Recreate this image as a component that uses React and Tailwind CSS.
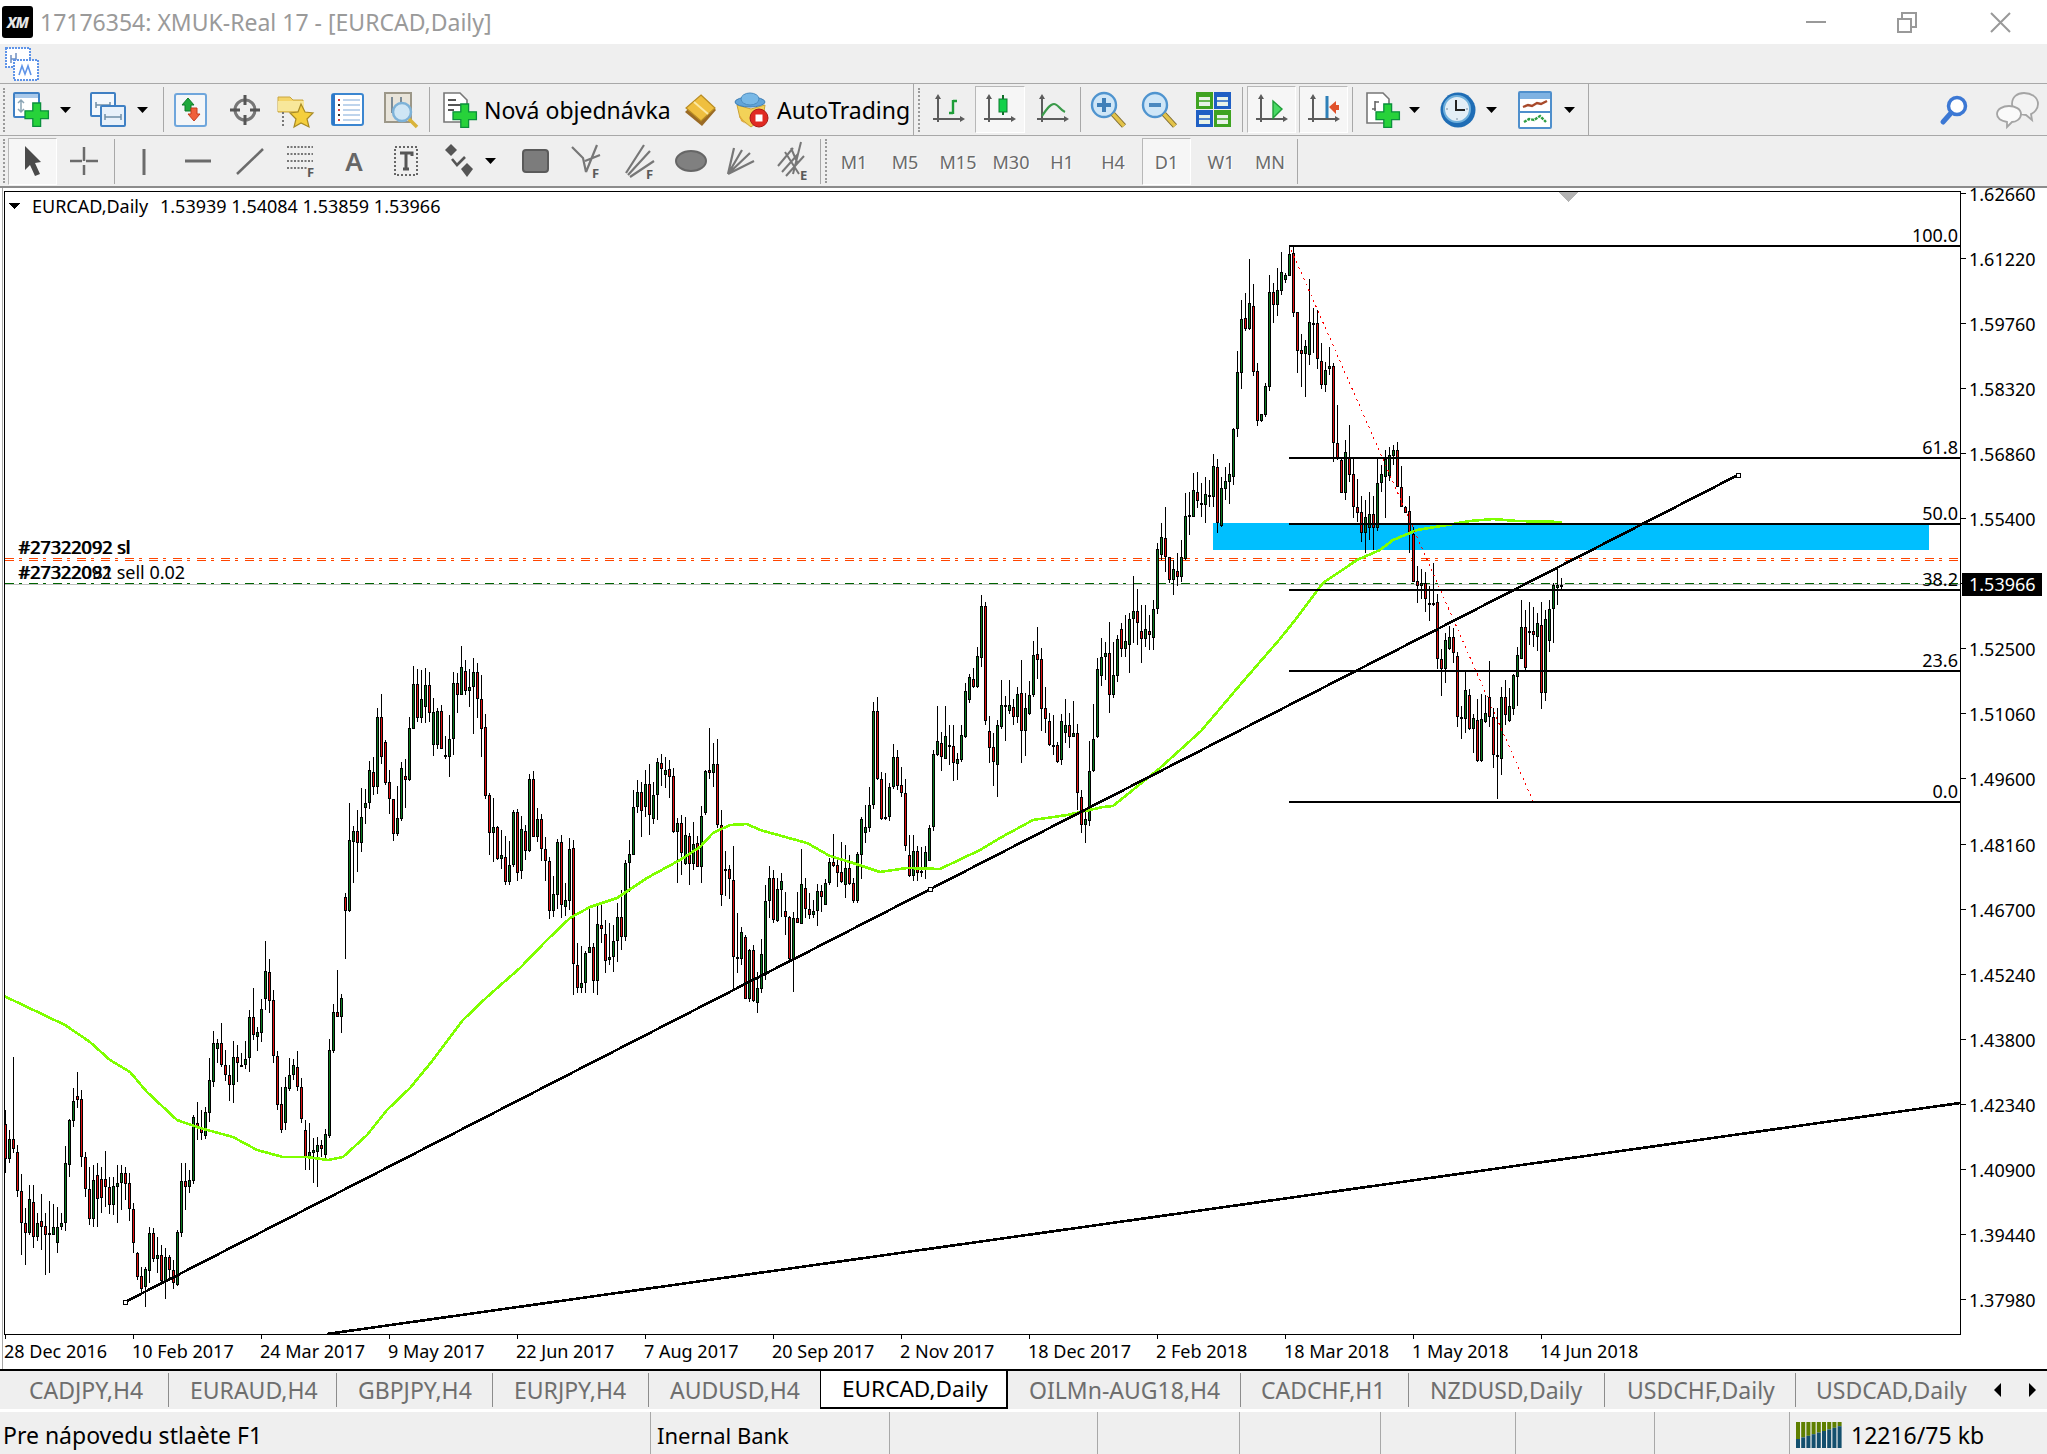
import React from "react";

// candle rows read off the chart: x-pos, body top, body bottom, wick top, wick bottom, colour
// values are 3x crop units, see parseBars
const BARS_A = "16 192 296 150 340 r,28 238 296 210 308 g,40 238 268 -10 280 r,52 276 392 256 412 r,64 392 490 342 586 r,76 490 520 445 614 r,88 418 520 376 525 g,100 426 530 376 564 r,112 488 530 460 544 g,124 484 500 402 570 r,136 498 526 460 646 r,148 520 522 422 638 g,160 502 524 432 524 g,172 500 548 440 578 g,184 488 500 460 510 g,196 310 488 258 512 g,208 180 314 176 352 g,220 124 182 84 200 g,232 108 120 36 145 r,244 118 290 90 320 r,256 290 388 276 412 r,268 388 476 320 496 r,280 360 476 315 502 g,292 344 418 310 502 r,304 358 414 320 460 r,316 358 382 272 440 r,328 382 434 350 462 r,340 378 434 350 465 g,352 370 382 315 490 g,364 340 370 316 450 g,376 338 372 320 420 r,388 370 446 338 482 r,400 446 550 430 578 r,412 580 650 575 660 r,424 648 686 622 706 r,436 628 682 620 742 g,448 520 634 502 670 g,460 520 598 505 606 r,472 584 596 530 640 g,484 584 664 555 670 r,496 590 664 565 716 g,508 590 630 585 660 r,520 630 670 600 686 r,532 516 676 510 678 g,544 362 518 310 532 g,556 362 380 310 450 r,568 360 380 330 398 g,580 172 362 165 372 g,592 190 200 126 240 r,604 208 218 150 240 r,616 156 228 140 236 g";
const BARS_B = "28 1350 1449 1285 1476 g,40 1240 1355 1203 1372 g,52 1240 1256 1228 1300 g,64 1238 1305 1180 1310 r,76 1304 1336 1260 1352 r,88 1336 1366 1305 1412 r,100 1282 1364 1232 1418 g,112 1282 1300 1246 1355 r,124 1305 1306 1270 1306 g,136 1286 1304 1234 1318 g,148 1162 1285 1140 1325 g,160 1162 1216 1075 1230 r,172 1207 1220 1190 1262 g,184 1138 1208 1108 1235 g,196 1024 1106 934 1140 g,208 1027 1112 988 1148 r,220 1111 1279 1080 1298 r,232 1279 1425 1262 1440 r,244 1422 1500 1370 1510 r,256 1372 1480 1340 1500 g,268 1334 1376 1285 1382 g,280 1306 1334 1286 1350 g,292 1310 1370 1262 1382 r,304 1372 1466 1345 1480 r,316 1500 1580 1470 1620 r,328 1566 1582 1480 1620 g,340 1560 1568 1525 1658 g,352 1546 1566 1522 1670 g,364 1544 1556 1530 1580 r,376 1512 1575 1498 1586 g,388 1260 1518 1228 1525 g,400 1147 1262 1122 1270 g,412 1147 1160 1020 1160 r,424 1105 1160 1092 1208 g,436 802 842 790 988 r,448 630 842 520 845 g,460 604 636 588 758 g,472 604 638 540 725 r,484 562 638 475 665 g,496 520 534 478 582 g,508 420 520 393 536 g,520 427 470 382 496 r,532 262 470 235 492 g,544 262 380 192 402 r,556 336 458 330 464 r,568 457 506 420 552 r,580 508 613 508 632 r,592 565 613 468 618 g,604 415 566 396 572 g,616 438 450 388 534 r,628 294 450 262 452 g,640 163 296 108 296 g,652 163 263 118 276 r,664 208 263 120 278 g,676 166 230 115 280 g,688 166 248 126 275 r,700 246 344 205 378 g,712 244 344 235 358 g,724 244 356 225 356 r,736 376 381 318 388 g,748 328 380 255 440 g,760 160 328 126 376 g,772 160 194 130 250 r,784 112 195 48 196 g,796 122 182 90 195 r,808 172 184 118 230 g,820 127 170 84 312 g,832 127 208 100 265 r,844 208 298 135 380 r,856 292 497 252 506 r,868 496 608 490 675 r,880 590 608 504 695 g,892 590 686 588 690 r,904 676 686 600 716 g,916 682 755 618 765 r,928 706 755 632 765 g,940 546 706 540 712 g,952 546 728 538 752 r,964 598 724 558 746 g,976 604 662 585 690 r,988 447 662 432 665 g,1000 447 620 423 622 r,1012 568 620 533 635 g,1024 568 658 552 692 r,1036 658 694 622 752 r,1048 694 842 682 866 r,1060 792 842 738 862 g,1072 636 794 628 836 g,1084 636 826 616 865 r,1096 810 832 760 858 g,1108 658 812 625 840 g,1120 655 1003 630 1096 r,1132 1006 1074 940 1088 r,1144 1060 1074 948 1090 g,1156 970 1060 962 1090 g,1168 950 970 838 970 g,1180 950 1052 940 1090 r,1192 882 1052 822 1096 g,1204 884 898 822 940 r,1216 912 992 870 1028 r,1228 980 990 880 1005 g,1240 934 980 884 1025 g,1252 862 934 820 995 g,1264 862 922 780 960 r,1276 700 922 690 932 g,1288 672 698 630 785 g,1300 530 674 480 675 g,1312 487 530 450 548 g,1324 487 544 455 622 r,1336 463 532 420 560 g,1348 463 556 402 616 r,1360 496 566 455 582 g,1372 396 494 385 570 g,1384 400 416 372 468 r,1396 421 436 380 475 g,1408 418 440 390 505 r,1420 438 606 415 608 r,1432 580 605 565 760 g";
const BARS_C = "4 730 820 705 885 r,16 766 852 710 855 g,28 768 852 760 914 r,40 792 852 726 870 g,52 790 860 768 862 r,64 708 860 678 908 g,76 574 698 570 705 g,88 570 578 445 596 r,100 552 578 488 620 g,112 552 734 478 745 r,124 734 946 690 978 r,136 868 872 812 948 g,148 868 898 855 958 r,160 900 1130 798 1230 r,172 1130 1138 1000 1180 r,184 1056 1138 1040 1155 g,196 1072 1258 1065 1258 r,208 1110 1258 1108 1265 g,220 1110 1264 1095 1265 r,232 1224 1268 1175 1298 g,244 1122 1226 1078 1240 g,256 964 1184 915 1200 g,268 895 964 858 1015 g,280 895 1020 870 1030 r,292 928 1022 895 1025 g,304 904 930 878 1010 g,316 992 1012 935 1065 r,328 1012 1136 1008 1140 r,340 1014 1140 995 1235 g,352 1014 1028 935 1030 r,364 912 1032 808 1032 g,376 925 986 895 1015 r,388 988 1004 940 1016 r,400 994 1005 960 1015 g,412 934 994 912 1037 g,424 934 950 915 995 r,436 910 974 898 975 g,448 846 910 835 915 g,460 846 858 762 860 r,472 856 880 832 920 r,484 876 906 786 908 r,496 865 914 795 955 g,508 865 912 825 915 r,520 910 962 895 970 r,532 822 962 815 970 g,544 716 824 710 898 g,556 742 760 675 790 g,568 676 744 620 755 g,580 394 676 366 686 g,592 394 596 352 600 r,604 596 718 575 720 r,616 712 716 580 720 g,628 622 712 610 722 g,640 532 622 492 628 g,652 532 618 510 630 r,664 616 638 560 650 r,676 638 798 598 812 r,688 824 888 765 890 r,700 814 888 765 902 g,712 814 878 798 902 r,724 872 876 800 890 g,736 816 866 798 898 g,748 745 842 735 842 g,760 522 740 510 752 g,772 484 524 378 528 g,784 490 530 455 572 r,796 468 536 378 538 g,808 495 497 435 555 g,820 498 550 435 602 r,832 538 552 520 600 g,844 465 540 435 545 g,856 333 470 308 475 g,868 292 360 282 368 g,880 298 322 265 325 r,892 228 322 200 325 g,904 78 234 44 260 g,916 78 422 65 435 r,928 454 504 408 548 r,940 502 546 460 618 r,952 435 554 420 652 g,964 374 440 300 446 g,976 376 380 348 482 g,988 376 392 300 402 g,1000 382 412 358 435 r,1012 342 412 322 430 g,1024 340 454 240 550 r,1036 384 454 340 528 g,1048 346 402 302 404 g,1060 226 346 184 352 g,1072 222 240 142 296 r,1084 238 386 204 452 r,1096 385 418 320 460 r,1108 424 496 398 498 r,1120 494 496 405 524 g,1132 496 545 485 550 r,1144 422 540 402 555 g,1156 434 458 358 490 g,1168 436 470 400 505 r,1180 460 470 362 470 g,1192 460 638 432 690 r,1204 652 736 630 758 r,1216 716 734 690 790 g,1228 572 722 484 738 g,1240 476 572 372 575 g,1252 268 470 235 474 g,1264 230 288 175 318 g,1276 220 230 186 300 g,1288 220 344 125 400 r,1300 284 344 185 355 g,1312 178 288 166 305 g,1324 148 206 128 230 r,1336 184 206 105 230 g,1348 118 194 100 278 g,1360 92 118 -12 190 g,1372 92 130 28 195 r,1384 152 176 75 250 r,1396 148 178 75 200 g,1408 152 166 105 210 r";
const BARS_D = "10 1168 1255 1140 1290 g,22 988 1168 970 1182 g,34 952 1004 910 1020 g,46 955 1012 862 1055 r,58 1012 1080 1010 1090 r,70 1048 1080 1020 1124 g,82 1054 1072 1000 1098 r,94 1012 1072 960 1085 g,106 888 1016 820 1020 g,118 886 890 815 945 g,130 810 890 760 890 g,142 816 842 755 865 r,154 848 856 790 892 g,166 822 856 770 908 g,178 824 826 780 860 g,190 738 830 702 860 g,202 742 910 718 938 r,214 805 918 770 920 g,226 783 806 740 840 g,238 762 785 730 852 g,250 627 770 625 795 g,262 457 628 392 650 g,274 297 458 240 506 g,286 295 326 220 332 r,298 250 328 118 330 g,310 258 455 192 468 r,322 453 602 430 618 r,334 583 602 583 605 g,346 498 585 490 590 g,358 216 500 165 513 g,370 216 254 190 308 r,382 210 254 145 288 g,394 156 212 95 225 g,406 165 180 160 190 g,418 102 168 78 168 g,430 100 278 82 290 r,442 276 392 276 458 r,454 390 402 342 500 r,466 378 402 360 530 g,478 306 404 178 435 g,490 308 312 265 400 g,502 310 418 270 447 r,514 424 494 370 506 r,526 450 494 425 516 g,538 438 446 380 465 g,550 438 668 430 725 r,562 670 718 555 720 r,574 720 818 712 820 r,586 696 818 660 840 g,598 714 764 615 785 r,610 762 862 715 895 r,622 862 878 778 905 r,634 876 938 828 965 r,646 892 938 840 1000 g,658 882 925 816 960 g,670 882 925 828 990 r,682 790 925 715 932 g,694 762 790 735 815 g,706 718 770 690 895 g,718 706 768 680 782 g,730 690 708 675 735 g,742 690 800 665 800 r,754 802 860 738 860 r,766 860 878 858 880 r,778 874 940 828 998 r";
const BARS_E = "190 42 185 20 185 r,202 184 198 138 248 r,214 190 198 148 236 g,226 190 238 156 275 r,238 248 250 198 302 g,250 248 250 130 258 g,262 246 416 222 448 r,274 418 446 388 527 r,286 360 446 338 488 g,298 352 386 318 390 g,310 352 400 325 428 r,322 408 592 395 622 r,334 592 596 558 656 g,346 510 596 455 638 g,358 526 626 506 630 r,370 595 626 582 698 g,382 600 722 538 725 r,394 598 724 522 725 g,406 580 606 525 608 g,418 530 590 423 622 r,430 592 706 565 745 r,442 706 710 565 838 g,454 530 716 500 765 g,466 530 586 480 614 r,478 558 604 504 606 g,490 466 566 462 584 g,502 406 470 380 558 g,514 320 416 240 416 g,526 322 444 270 450 r,538 334 336 245 375 g,550 334 346 262 380 r,562 310 350 280 392 g,574 316 520 246 568 r,586 296 520 270 542 g,598 268 364 240 395 g,610 196 268 190 368 g,622 196 204 148 254 g,634 194 196 175 208 g";

function parseBars(str, xo, yo) {
  return str.split(",").map((row) => {
    const [p, t, b, wt, wb, c] = row.trim().split(" ");
    const x = 5 + 4 * Math.round((xo + p / 3 - 5) / 4);
    return { x, t: Math.round(yo + t / 3), b: Math.round(yo + b / 3), wt: Math.round(yo + wt / 3), wb: Math.round(yo + wb / 3), c };
  });
}

const bars = [
  ...parseBars(BARS_A, 0, 1060),
  ...parseBars(BARS_B, 200, 630),
  ...parseBars(BARS_C, 680, 580),
  ...parseBars(BARS_D, 1150, 220),
  ...parseBars(BARS_E, 1350, 520),
];

const MA_POINTS = "4,996 65,1025 90,1042 110,1060 130,1072 147,1092 177,1120 200,1128 233,1137 257,1150 283,1157 307,1157 328,1160 343,1157 367,1135 387,1110 410,1088 433,1060 463,1020 487,997 520,968 547,940 570,918 590,907 617,898 647,878 680,860 700,847 713,833 730,825 747,824 760,830 807,843 830,856 853,863 880,872 907,868 940,869 980,850 1000,838 1033,820 1067,815 1103,807 1113,806 1160,768 1201,731 1240,685 1279,640 1296,619 1323,583 1357,560 1380,550 1393,540 1417,530 1447,525 1470,521 1493,519 1517,521 1562,522";

const PRICE_LABELS = ["1.62660", "1.61220", "1.59760", "1.58320", "1.56860", "1.55400", null, "1.52500", "1.51060", "1.49600", "1.48160", "1.46700", "1.45240", "1.43800", "1.42340", "1.40900", "1.39440", "1.37980"];
const DATE_LABELS = ["28 Dec 2016", "10 Feb 2017", "24 Mar 2017", "9 May 2017", "22 Jun 2017", "7 Aug 2017", "20 Sep 2017", "2 Nov 2017", "18 Dec 2017", "2 Feb 2018", "18 Mar 2018", "1 May 2018", "14 Jun 2018"];
const FIB_LEVELS = [
  { label: "100.0", y: 245 },
  { label: "61.8", y: 457 },
  { label: "50.0", y: 523 },
  { label: "38.2", y: 589 },
  { label: "23.6", y: 670 },
  { label: "0.0", y: 801 },
];

function Chart() {
  return (
    <svg width="2047" height="1181" viewBox="0 188 2047 1181" shapeRendering="crispEdges" className="block">
      <defs>
        <clipPath id="plot">
          <rect x="5" y="192" width="1955" height="1142" />
        </clipPath>
      </defs>
      <rect x="2" y="188" width="1" height="1181" fill="#a8a8a8" />
      <rect x="4.5" y="191.5" width="1956" height="1143" fill="none" stroke="#000" strokeWidth="1" />

      <g clipPath="url(#plot)">
        <rect x="1213" y="523" width="716" height="27" fill="#00bfff" />
        <rect x="5" y="584" width="1955" height="1" fill="#c0c0c0" />
        <path d="M5 558.5H1958M5 560.5H1958" stroke="#ff4500" strokeWidth="1" strokeDasharray="9 5 3 7" fill="none" />
        <path d="M5 583.5H1958" stroke="#006400" strokeWidth="1" strokeDasharray="9 5 3 7" fill="none" />
        {bars.map((b, i) => (
          <g key={i}>
            <rect x={b.x} y={b.wt} width="1" height={Math.max(1, b.wb - b.wt)} fill="#000" />
            <rect x={b.x - 1} y={b.t} width="3" height={Math.max(2, b.b - b.t)} fill="#000" />
            {b.b - b.t > 2 && <rect x={b.x} y={b.t + 1} width="1" height={b.b - b.t - 2} fill={b.c === "g" ? "#0a7a1e" : "#e01010"} />}
          </g>
        ))}
        <polyline points={MA_POINTS} fill="none" stroke="#7fff00" strokeWidth="2.6" />
        <path d="M1289 245L1533 801" stroke="#ff0000" strokeWidth="1" strokeDasharray="2 4" fill="none" />
        {FIB_LEVELS.map((f) => (
          <rect key={f.label} x="1289" y={f.y} width="671" height="2" fill="#000" />
        ))}
        <path d="M125 1302L1738 475" stroke="#000" strokeWidth="2.6" fill="none" />
        <path d="M327 1334L1960 1103" stroke="#000" strokeWidth="2.6" fill="none" />
        <rect x="123" y="1300" width="4" height="4" fill="#fff" stroke="#000" />
        <rect x="928" y="887" width="4" height="4" fill="#fff" stroke="#000" />
        <rect x="1736" y="473" width="4" height="4" fill="#fff" stroke="#000" />
        <path d="M1559 192H1578L1568.5 202Z" fill="#b4b4b4" />
      </g>

      <g fill="#000" fontSize="18">
        <path d="M9 203H20L14.5 209Z" />
        <text x="32" y="213">EURCAD,Daily</text>
        <text x="160" y="213">1.53939 1.54084 1.53859 1.53966</text>

        <text x="18" y="554">#27322092 sl</text>
        <text x="19" y="554">#27322092 sl</text>
        <text x="18" y="579">#27322092 sell 0.02</text>
        <text x="19" y="579">#27322081</text>

        {FIB_LEVELS.map((f) => (
          <text key={f.label} x="1958" y={f.y - 3} textAnchor="end">{f.label}</text>
        ))}

        {PRICE_LABELS.map((label, i) => {
          const y = Math.round(193 + 65.05 * i);
          return (
            <g key={i}>
              <rect x="1961" y={y} width="5" height="1" />
              {label && <text x="1969" y={y + 8}>{label}</text>}
            </g>
          );
        })}

        <rect x="1962" y="573" width="80" height="23" />
        <text x="1969" y="591" fill="#fff">1.53966</text>

        {DATE_LABELS.map((label, i) => (
          <g key={label}>
            <rect x={5 + 128 * i} y="1335" width="1" height="4" />
            <text x={4 + 128 * i} y="1358">{label}</text>
          </g>
        ))}
      </g>
    </svg>
  );
}

function Svg({ w = 36, h = 36, children }) {
  return (
    <svg width={w} height={h} viewBox={`0 0 ${w} ${h}`} className="block overflow-visible" fill="none">
      {children}
    </svg>
  );
}

const Plus = ({ x = 0, y = 0, s = 1 }) => (
  <path transform={`translate(${x} ${y}) scale(${s})`} d="M6 0h6v6h6v6h-6v6H6v-6H0V6h6z" fill="#27d23a" stroke="#0b8f3c" strokeWidth="1" />
);

const Axes = ({ children }) => (
  <Svg w={34} h={34}>
    <path d="M6 4v25M1 26h29" stroke="#5c5c5c" strokeWidth="2" />
    <path d="M6 1l3 5H3zM33 26l-5 3v-6z" fill="#5c5c5c" />
    {children}
  </Svg>
);

function NewChartIcon() {
  return (
    <Svg>
      <rect x="1" y="1" width="25" height="24" rx="1" fill="#fff" stroke="#3f80c4" strokeWidth="2" />
      <rect x="2" y="2" width="23" height="4" fill="#a9c9ea" />
      <path d="M8 8v12M5 11l3-3 3 3M5 17l3 3 3-3" stroke="#8ba5b5" strokeWidth="1.5" />
      <Plus x={12} y={11} s={1.3} />
    </Svg>
  );
}

function ProfilesIcon() {
  return (
    <Svg>
      <rect x="1" y="1" width="24" height="23" rx="1" fill="#f4f8fc" stroke="#3f80c4" strokeWidth="2" />
      <path d="M6 13h14M6 10v6M20 10v6" stroke="#6f8fa8" strokeWidth="1.5" />
      <rect x="11" y="14" width="24" height="20" rx="1" fill="#e8f1fa" stroke="#3f80c4" strokeWidth="2" />
      <path d="M15 25h16M15 22v6M31 22v6" stroke="#6f8fa8" strokeWidth="1.5" />
    </Svg>
  );
}

function MarketWatchIcon() {
  return (
    <Svg w={34} h={34}>
      <rect x="1" y="1" width="31" height="32" rx="2" fill="#f4f6f8" stroke="#6fa6dc" strokeWidth="2" />
      <path d="M14 5l6 7h-3v6h-6v-6H8z" fill="#1ea83c" stroke="#0f7a2a" />
      <path d="M20 28l-6-7h3v-6h6v6h3z" fill="#f0603a" stroke="#c53a1a" />
    </Svg>
  );
}

function NavigatorIcon() {
  return (
    <Svg w={32} h={34}>
      <circle cx="16" cy="17" r="10" stroke="#777" strokeWidth="3" />
      <path d="M16 2v10M16 22v10M1 17h10M21 17h10" stroke="#555" strokeWidth="3" />
    </Svg>
  );
}

function FavoritesIcon() {
  return (
    <Svg w={38} h={36}>
      <path d="M1 5h12l3 3h10v12H1z" fill="#f4d56a" stroke="#c9a640" />
      <path d="M1 9h26v10H1z" fill="#f8e79a" />
      <path d="M6 20v14" stroke="#777" strokeWidth="2" strokeDasharray="2 2" />
      <path d="M24 12l4 8 8 1-6 6 2 8-8-4-7 4 2-8-6-6 8-1z" fill="#f5cf3d" stroke="#a88a24" strokeWidth="1.2" />
    </Svg>
  );
}

function TerminalIcon() {
  return (
    <Svg w={34} h={34}>
      <rect x="1" y="1" width="31" height="31" rx="2" fill="#fff" stroke="#3b86d0" strokeWidth="2" />
      <rect x="1" y="1" width="3" height="31" fill="#2d78c8" />
      <path d="M12 7h17M12 12h17M12 17h17M12 22h17M12 27h17" stroke="#a9c6e6" strokeWidth="1.6" />
      <path d="M7 7h2M7 17h2M7 27h2" stroke="#d23a3a" strokeWidth="2" />
      <path d="M7 12h2M7 22h2" stroke="#333" strokeWidth="2" />
    </Svg>
  );
}

function TesterIcon() {
  return (
    <Svg w={36} h={36}>
      <rect x="1" y="1" width="26" height="29" fill="#e8e4da" stroke="#9c9788" strokeWidth="2" />
      <path d="M8 5v16M17 5v14" stroke="#7b8b96" strokeWidth="2" />
      <circle cx="18" cy="20" r="9" fill="#cfe6f5" stroke="#7db2d8" strokeWidth="2.5" />
      <path d="M25 27l8 8" stroke="#d9b33a" strokeWidth="3.5" />
    </Svg>
  );
}

function NewOrderIcon() {
  return (
    <Svg w={34} h={36}>
      <path d="M1 1h16l7 7v22H1z" fill="#fff" stroke="#777" strokeWidth="1.6" />
      <path d="M5 8h8M5 13h14M5 18h6" stroke="#555" strokeWidth="2" />
      <Plus x={10} y={12} s={1.3} />
    </Svg>
  );
}

function GoldIcon() {
  return (
    <Svg w={34} h={34}>
      <path d="M19 3l14 14-14 16L2 19z" fill="#9a6a24" />
      <path d="M18 2l14 13-14 13L3 15z" fill="#efbf3f" stroke="#b98d24" strokeWidth="1.2" />
      <path d="M11 9l14 12" stroke="#fbe9a3" strokeWidth="2" />
    </Svg>
  );
}

function AutoTradingIcon() {
  return (
    <Svg>
      <path d="M4 13l14 4 14-4-2 13-12 9-11-9z" fill="#f3d258" stroke="#c8a238" />
      <path d="M6 22l6 9 6 4-10-6z" fill="#e0a93a" />
      <ellipse cx="17" cy="10" rx="15" ry="5" fill="#62a4d8" stroke="#3d7eb5" />
      <ellipse cx="17" cy="7" rx="9" ry="6" fill="#78b8e6" stroke="#4c8cc0" />
      <circle cx="26" cy="26" r="9" fill="#e02a22" stroke="#a81a16" />
      <rect x="22.5" y="22.5" width="7" height="7" fill="#fff" />
    </Svg>
  );
}

function BarChartIcon() {
  return (
    <Axes>
      <path d="M21 7v14M21 8h4M21 20h-4" stroke="#1e9e38" strokeWidth="2.4" />
    </Axes>
  );
}

function CandleIcon() {
  return (
    <Axes>
      <path d="M20 2v20" stroke="#0f6e28" strokeWidth="2" />
      <rect x="16" y="6" width="8" height="13" fill="#12d14a" stroke="#0f7a30" />
    </Axes>
  );
}

function LineChartIcon() {
  return (
    <Axes>
      <path d="M6 23c4-6 8-12 12-12s6 6 11 8" stroke="#3a9a4a" strokeWidth="2.2" />
    </Axes>
  );
}

function ZoomIcon({ minus }) {
  return (
    <Svg>
      <circle cx="13" cy="13" r="12" fill="#cfe6f7" stroke="#4f94cf" strokeWidth="2.4" />
      {minus ? (
        <path d="M7 13h12" stroke="#4a88bf" strokeWidth="4" />
      ) : (
        <path d="M6 13h14M13 6v14" stroke="#3f7fb8" strokeWidth="4" />
      )}
      <path d="M22 22l11 12" stroke="#7d6a30" strokeWidth="5.5" />
      <path d="M22 22l11 12" stroke="#e3c34a" strokeWidth="3.5" />
    </Svg>
  );
}

function TileIcon() {
  const win = (x, y, fill) => (
    <g>
      <rect x={x} y={y} width="17" height="17" fill={fill} />
      <rect x={x + 3} y={y + 5} width="11" height="9" fill="#e8f2e8" />
      <path d={`M${x + 3} ${y + 9}h11`} stroke={fill} strokeWidth="1.5" />
    </g>
  );
  return (
    <Svg w={35} h={35}>
      {win(0, 0, "#3ea321")}
      {win(18, 0, "#1f5fc4")}
      {win(0, 18, "#1f5fc4")}
      {win(18, 18, "#3ea321")}
    </Svg>
  );
}

function ShiftIcon() {
  return (
    <Axes>
      <path d="M18 8l9 8-9 9z" fill="#49d964" stroke="#1e9e38" strokeWidth="1.4" />
    </Axes>
  );
}

function AutoScrollIcon() {
  return (
    <Axes>
      <path d="M20 3v22" stroke="#2d7fb8" strokeWidth="3" />
      <path d="M22 14l7-6v4h3v5h-3v4z" fill="#e0502a" />
    </Axes>
  );
}

function NewDocIcon() {
  return (
    <Svg w={34} h={36}>
      <path d="M1 1h16l6 6v24H1z" fill="#fff" stroke="#777" strokeWidth="1.6" />
      <path d="M9 9v10M9 10h4M6 17h4" stroke="#666" strokeWidth="1.6" />
      <Plus x={10} y={12} s={1.3} />
    </Svg>
  );
}

function ClockIcon() {
  return (
    <Svg>
      <circle cx="18" cy="18" r="17.5" fill="#1f6db5" />
      <circle cx="17" cy="17" r="13" fill="#e3eef6" stroke="#6fb0dc" strokeWidth="2" />
      <path d="M16 8v10h9" stroke="#222" strokeWidth="2" />
      <path d="M6 17h2M26 17h2M17 26v2" stroke="#99aabb" strokeWidth="1.4" />
    </Svg>
  );
}

function IndicatorIcon() {
  return (
    <Svg w={34} h={38}>
      <rect x="1" y="1" width="32" height="36" rx="1" fill="#fff" stroke="#4f8fcc" strokeWidth="2" />
      <rect x="2" y="2" width="30" height="6" fill="#7fb2e2" />
      <rect x="2" y="20" width="30" height="2" fill="#4f8fcc" />
      <path d="M5 16l5-2 4 1 5-3 4 1 6-3" stroke="#a8492a" strokeWidth="2.4" />
      <path d="M6 31l5-3 5 1 6-4 6 6" stroke="#2f9e44" strokeWidth="2.4" strokeDasharray="3 1" />
    </Svg>
  );
}

function SearchIcon() {
  return (
    <Svg w={28} h={30}>
      <circle cx="17" cy="11" r="8.5" fill="#fff" stroke="#3c78d4" strokeWidth="3.5" />
      <path d="M11 18L3 27" stroke="#3c78d4" strokeWidth="5" strokeLinecap="round" />
    </Svg>
  );
}

function ChatIcon() {
  return (
    <Svg w={43} h={36}>
      <path d="M28 1c7 0 14 4 14 11 0 5-4 9-7 10l1 6-6-5c-7 0-14-4-14-11S21 1 28 1z" fill="#f3f3f3" stroke="#a4a4a4" strokeWidth="1.8" />
      <path d="M13 14c6 0 12 3 12 8 0 5-5 8-9 8l-5 5v-5c-5-1-10-3-10-8s6-8 12-8z" fill="#fafafa" stroke="#a4a4a4" strokeWidth="1.8" />
    </Svg>
  );
}

function CursorIcon() {
  return (
    <Svg w={20} h={32}>
      <path d="M2 1l16 16-6 1 5 11-5 2-5-11-5 5z" fill="#4a4a4a" />
    </Svg>
  );
}

function ToolLine({ d, w = 30, h = 30, width = 2.5 }) {
  return (
    <Svg w={w} h={h}>
      <path d={d} stroke="#6b6b6b" strokeWidth={width} />
    </Svg>
  );
}

const IconF = ({ x, y, t = "F" }) => (
  <text x={x} y={y} fontSize="13" fontWeight="700" fill="#5a5a5a">{t}</text>
);

function FiboIcon() {
  return (
    <Svg w={30} h={34}>
      <path d="M1 3h26M1 10h26M1 17h26M1 24h20" stroke="#777" strokeWidth="2" strokeDasharray="2 1.5" />
      <IconF x={21} y={33} />
    </Svg>
  );
}

function TextLabelIcon() {
  return (
    <Svg w={28} h={32}>
      <path d="M3 2h22v28H3z" stroke="#666" strokeWidth="2" strokeDasharray="2 2" />
      <path d="M8 8h12v3M14 8v16M11 24h6" stroke="#555" strokeWidth="3" />
    </Svg>
  );
}

function ArrowsIcon() {
  return (
    <Svg w={32} h={36}>
      <path d="M8 1l6 6-6 6-6-6z" fill="#555" />
      <path d="M24 20l6 6-6 8-6-8z" fill="#555" />
      <path d="M9 16l5 6 8-8" stroke="#555" strokeWidth="2.6" />
    </Svg>
  );
}

function FanFIcon() {
  return (
    <Svg w={32} h={36}>
      <path d="M2 4l11 11 3 14M27 2L16 29M30 12L15 18" stroke="#777" strokeWidth="2.2" />
      <IconF x={22} y={35} />
    </Svg>
  );
}

function ChannelFIcon() {
  return (
    <Svg w={32} h={36}>
      <path d="M2 30L20 2M4 32L26 8M6 34L30 18" stroke="#777" strokeWidth="2.2" />
      <IconF x={22} y={36} />
    </Svg>
  );
}

function GannFanIcon() {
  return (
    <Svg w={30} h={32}>
      <path d="M2 29L8 3M2 29L16 5M2 29L24 8M2 29L28 16" stroke="#777" strokeWidth="2.2" />
    </Svg>
  );
}

function ElliottIcon() {
  return (
    <Svg w={32} h={38}>
      <path d="M1 24L16 6M5 30L21 12M9 34L27 14M8 10l14 22M14 6l6 14M24 0l-8 32" stroke="#777" strokeWidth="2" />
      <IconF x={23} y={38} t="E" />
    </Svg>
  );
}

const Drop = ({ className = "" }) => (
  <div className={`flex items-center justify-center ${className}`}>
    <svg width="11" height="6" viewBox="0 0 11 6" className="block"><path d="M0 0h11L5.5 6z" fill="#000" /></svg>
  </div>
);

const Sep = ({ className = "" }) => <div className={`h-[45px] w-px bg-[#a8a8a8] ${className}`} />;
const Grip = ({ className = "" }) => <div className={`h-[44px] w-[3px] border-l-2 border-dotted border-[#9a9a9a] ${className}`} />;

function Btn({ active, className = "", children }) {
  const look = active ? "border border-t-[#b8b8b8] border-l-[#b8b8b8] border-r-white border-b-white bg-[#f6f6f6]" : "";
  return <div className={`flex h-[47px] items-center justify-center ${look} ${className}`}>{children}</div>;
}

function TimeFrame({ className = "", active, children }) {
  return (
    <Btn active={active} className={className}>
      <span className="pt-[2px] text-[18px] text-[#6a6a6a] [text-shadow:1px_1px_0_#fff]">{children}</span>
    </Btn>
  );
}

const TABS = [
  { label: "CADJPY,H4", cls: "w-[169px] pl-[29px]" },
  { label: "EURAUD,H4", cls: "w-[168px] pl-[21px]" },
  { label: "GBPJPY,H4", cls: "w-[156px] pl-[21px]" },
  { label: "EURJPY,H4", cls: "w-[156px] pl-[21px]" },
  { label: "AUDUSD,H4", cls: "w-[171px] pl-[21px] border-r-0" },
  { label: "EURCAD,Daily", active: true },
  { label: "OILMn-AUG18,H4", cls: "w-[233px] pl-[21px]" },
  { label: "CADCHF,H1", cls: "w-[168px] pl-[20px]" },
  { label: "NZDUSD,Daily", cls: "w-[196px] pl-[21px]" },
  { label: "USDCHF,Daily", cls: "w-[191px] pl-[22px]" },
  { label: "USDCAD,Daily", cls: "w-[187px] pl-[20px] border-r-0" },
];

export default function App() {
  return (
    <div className="flex h-[1454px] w-[2047px] flex-col overflow-hidden bg-white font-['Noto_Sans',sans-serif] text-black">
      {/* title bar */}
      <div className="flex h-[44px] items-center">
        <div className="ml-[2px] flex h-[32px] w-[31px] items-center justify-center rounded-[3px] bg-black text-[15px] font-extrabold italic leading-none tracking-[-1px] text-white">
          <span className="text-[#e6e6e6]">XM</span>
        </div>
        <div className="ml-[7px] text-[23px] text-[#9a9a9a]">17176354: XMUK-Real 17 - [EURCAD,Daily]</div>
        <div className="ml-auto flex items-center">
          <svg width="20" height="20" viewBox="0 0 20 20" className="block"><path d="M0 10h20" stroke="#999" strokeWidth="2" /></svg>
          <svg width="20" height="21" viewBox="0 0 20 21" className="ml-[71px] block" fill="none"><path d="M1 7h13v13H1zM5 7V1h14v14h-5" stroke="#999" strokeWidth="2" /></svg>
          <svg width="21" height="21" viewBox="0 0 21 21" className="ml-[73px] mr-[36px] block"><path d="M1 1l19 19M20 1L1 20" stroke="#999" strokeWidth="2" /></svg>
        </div>
      </div>

      {/* menu strip, only the child window icon is shown */}
      <div className="flex h-[40px] items-center border-b border-[#a8a8a8] bg-[#efefef] pl-[5px]">
        <svg width="34" height="34" viewBox="0 0 34 34" className="block" fill="none">
          <rect x="1" y="1" width="24" height="19" fill="#fff" stroke="#5f94e8" strokeWidth="2" strokeDasharray="2 1" />
          <path d="M6 8v8M6 12h5M11 6v8" stroke="#6f8fc0" strokeWidth="1.5" />
          <rect x="9" y="13" width="24" height="20" fill="#fff" stroke="#5f94e8" strokeWidth="2" strokeDasharray="2 1" />
          <path d="M14 28l3-9 3 8 3-8 3 9" stroke="#5f94e8" strokeWidth="1.6" />
        </svg>
      </div>

      {/* main toolbar */}
      <div className="flex h-[52px] items-center border-b border-[#a8a8a8] bg-[#efefef]">
        <Grip className="ml-[3px]" />
        <Btn className="ml-px w-[48px]"><NewChartIcon /></Btn>
        <Drop className="w-[20px]" />
        <Btn className="ml-[9px] w-[48px]"><ProfilesIcon /></Btn>
        <Drop className="w-[20px]" />
        <Sep className="ml-[11px]" />
        <Btn className="ml-[3px] w-[48px]"><MarketWatchIcon /></Btn>
        <Btn className="ml-[6px] w-[48px]"><NavigatorIcon /></Btn>
        <Btn className="ml-[3px] w-[48px]"><FavoritesIcon /></Btn>
        <Btn className="ml-[4px] w-[48px]"><TerminalIcon /></Btn>
        <Btn className="ml-[6px] w-[48px]"><TesterIcon /></Btn>
        <Sep className="ml-[3px]" />
        <div className="ml-[13px] w-[34px]"><NewOrderIcon /></div>
        <span className="ml-[7px] mt-[1px] w-[183px] whitespace-nowrap text-[23px]">Nová objednávka</span>
        <div className="ml-[16px] w-[34px]"><GoldIcon /></div>
        <div className="ml-[16px] w-[36px]"><AutoTradingIcon /></div>
        <span className="ml-[8px] mt-[1px] w-[131px] whitespace-nowrap text-[23px]">AutoTrading</span>
        <div className="ml-[5px] h-full w-px bg-[#a8a8a8]" />
        <Grip className="ml-[4px]" />
        <Btn className="ml-[4px] w-[48px]"><BarChartIcon /></Btn>
        <Btn active className="ml-[2px] w-[50px]"><CandleIcon /></Btn>
        <Btn className="ml-[4px] w-[48px]"><LineChartIcon /></Btn>
        <Sep className="ml-[3px]" />
        <Btn className="ml-[4px] w-[48px]"><ZoomIcon /></Btn>
        <Btn className="ml-[3px] w-[48px]"><ZoomIcon minus /></Btn>
        <Btn className="ml-[5px] w-[48px]"><TileIcon /></Btn>
        <Sep className="ml-[5px]" />
        <Btn active className="ml-[4px] w-[49px]"><ShiftIcon /></Btn>
        <Btn active className="ml-[3px] w-[49px]"><AutoScrollIcon /></Btn>
        <Sep className="ml-[4px]" />
        <Btn className="ml-[6px] w-[48px]"><NewDocIcon /></Btn>
        <Drop className="w-[14px]" />
        <Btn className="ml-[13px] w-[48px]"><ClockIcon /></Btn>
        <Drop className="w-[18px]" />
        <Btn className="ml-[11px] w-[48px]"><IndicatorIcon /></Btn>
        <Drop className="w-[20px]" />
        <div className="ml-[9px] h-full w-px bg-[#a8a8a8]" />
        <div className="ml-auto mr-[8px] flex items-center gap-[28px]">
          <SearchIcon />
          <ChatIcon />
        </div>
      </div>

      {/* drawing tools and timeframes */}
      <div className="flex h-[52px] items-center border-b-2 border-[#8c8c8c] bg-[#efefef]">
        <Grip className="ml-[3px]" />
        <Btn active className="ml-[2px] w-[49px]"><CursorIcon /></Btn>
        <Btn className="ml-[3px] w-[48px]"><ToolLine d="M15 1v14M15 19v10M1 15h12M17 15h12" /></Btn>
        <Sep className="ml-[6px]" />
        <Btn className="ml-[7px] w-[44px]"><ToolLine d="M15 3v26" width={3} /></Btn>
        <Btn className="ml-[10px] w-[44px]"><ToolLine d="M2 15h26" width={3} /></Btn>
        <Btn className="ml-[8px] w-[44px]"><ToolLine d="M2 28L28 3" /></Btn>
        <Btn className="ml-[7px] w-[44px]"><FiboIcon /></Btn>
        <Btn className="ml-[9px] w-[44px]"><span className="text-[26px] font-semibold leading-none text-[#666]">A</span></Btn>
        <Btn className="ml-[8px] w-[44px]"><TextLabelIcon /></Btn>
        <Btn className="ml-[13px] w-[36px]"><ArrowsIcon /></Btn>
        <Drop className="ml-[6px] w-[14px]" />
        <Btn className="ml-[16px] w-[44px]"><div className="h-[24px] w-[27px] rounded-[4px] border-2 border-[#5a5a5a] bg-[#7c7c7c]" /></Btn>
        <Btn className="ml-[7px] w-[44px]"><FanFIcon /></Btn>
        <Btn className="ml-[10px] w-[44px]"><ChannelFIcon /></Btn>
        <Btn className="ml-[7px] w-[44px]"><div className="h-[22px] w-[32px] rounded-[50%] border-2 border-[#666] bg-[#808080]" /></Btn>
        <Btn className="ml-[6px] w-[44px]"><GannFanIcon /></Btn>
        <Btn className="ml-[8px] w-[44px]"><ElliottIcon /></Btn>
        <Sep className="ml-[5px]" />
        <Grip className="ml-[4px]" />
        <TimeFrame className="ml-[2px] w-[48px]">M1</TimeFrame>
        <TimeFrame className="ml-[3px] w-[48px]">M5</TimeFrame>
        <TimeFrame className="ml-[5px] w-[48px]">M15</TimeFrame>
        <TimeFrame className="ml-[5px] w-[48px]">M30</TimeFrame>
        <TimeFrame className="ml-[3px] w-[48px]">H1</TimeFrame>
        <TimeFrame className="ml-[3px] w-[48px]">H4</TimeFrame>
        <TimeFrame active className="ml-[5px] w-[49px]">D1</TimeFrame>
        <TimeFrame className="ml-[6px] w-[48px]">W1</TimeFrame>
        <TimeFrame className="ml-px w-[48px]">MN</TimeFrame>
        <Sep className="ml-[3px]" />
      </div>

      <Chart />

      {/* chart tabs */}
      <div className="flex h-[40px] border-t-2 border-black bg-[#efefef]">
        {TABS.map((tab) =>
          tab.active ? (
            <div key={tab.label} className="flex h-[38px] w-[188px] items-center whitespace-nowrap border-b-2 border-l border-r-2 border-black bg-white pl-[21px] text-[22.6px]">
              {tab.label}
            </div>
          ) : (
            <div key={tab.label} className={`my-[2px] flex items-center whitespace-nowrap border-r border-[#8c8c8c] text-[23px] text-[#6e6e6e] ${tab.cls}`}>
              {tab.label}
            </div>
          )
        )}
        <div className="ml-[11px] flex items-center gap-[26px]">
          <svg width="8" height="14" viewBox="0 0 8 14" className="block"><path d="M7 0v14L0 7z" fill="#000" /></svg>
          <svg width="8" height="14" viewBox="0 0 8 14" className="block"><path d="M1 0v14l7-7z" fill="#000" /></svg>
        </div>
      </div>
      <div className="h-[3px] bg-white" />

      {/* status bar */}
      <div className="flex h-[42px] items-stretch bg-[#efefef] text-[22px]">
        <div className="flex w-[651px] items-center border-r border-[#a8a8a8] pl-[3px] pt-[4px] text-[23px]">Pre nápovedu stlaète F1</div>
        <div className="flex w-[239px] items-center border-r border-[#a8a8a8] pl-[6px] pt-[4px]">Inernal Bank</div>
        <div className="w-[208px] border-r border-[#a8a8a8]" />
        <div className="w-[142px] border-r border-[#a8a8a8]" />
        <div className="w-[141px] border-r border-[#a8a8a8]" />
        <div className="w-[135px] border-r border-[#a8a8a8]" />
        <div className="w-[139px] border-r border-[#a8a8a8]" />
        <div className="w-[135px] border-r border-[#a8a8a8]" />
        <div className="flex flex-1 items-center pl-[6px] pt-[4px] text-[23px]">
          <svg width="47" height="26" viewBox="0 0 47 26" className="block">
            {[0, 1, 2, 3, 4, 5, 6, 7, 8].map((i) => (
              <g key={i}>
                <rect x={i * 5.2} y="0" width="4" height={17 - i * 1.6} fill="#5e7f00" />
                <rect x={i * 5.2} y={17 - i * 1.6} width="4" height={9 + i * 1.6} fill="#14506e" />
              </g>
            ))}
          </svg>
          <span className="ml-[8px]">12216/75 kb</span>
        </div>
      </div>
    </div>
  );
}
